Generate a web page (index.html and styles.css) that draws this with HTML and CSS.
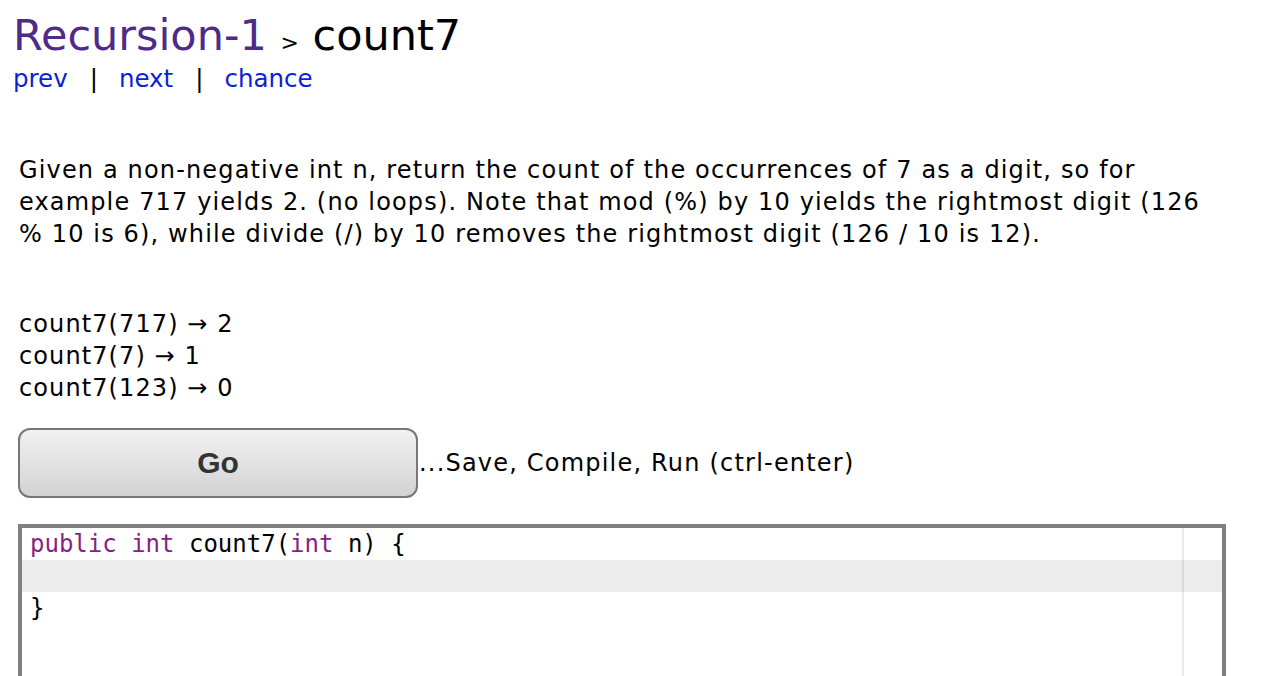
FILE: index.html
```html
<!DOCTYPE html>
<html>
<head>
<meta charset="utf-8">
<link rel="stylesheet" href="styles.css">
</head>
<body>
<div class="page">
  <h1 class="title"><a class="crumb" href="#">Recursion-1</a> <span class="sep">&gt;</span> <span class="name">count7</span></h1>
  <div class="nav"><a href="#">prev</a><span class="bar">|</span><a href="#">next</a><span class="bar">|</span><a href="#">chance</a></div>
  <p class="desc">Given a non-negative int n, return the count of the occurrences of 7 as a digit, so for example 717 yields 2. (no loops). Note that mod (%) by 10 yields the rightmost digit (126 % 10 is 6), while divide (/) by 10 removes the rightmost digit (126 / 10 is 12).</p>
  <div class="examples">
    <div>count7(717) &rarr; 2</div>
    <div>count7(7) &rarr; 1</div>
    <div>count7(123) &rarr; 0</div>
  </div>
  <div class="run">
    <button class="go">Go</button>
    <span class="hint">...Save, Compile, Run (ctrl-enter)</span>
  </div>
  <div class="editor">
    <div class="margin-line"></div>
    <div class="line"><span class="kw">public</span> <span class="kw">int</span> count7(<span class="kw">int</span> n) {</div>
    <div class="line active"></div>
    <div class="line">}</div>
  </div>
</div>
</body>
</html>
```

FILE: styles.css
```css
html, body {
  margin: 0;
  padding: 0;
  background: #fff;
}
.page {
  font-family: "DejaVu Sans", Verdana, sans-serif;
  color: #000;
}
.title {
  margin: 10px 0 0 13px;
  font-size: 43px;
  line-height: 50px;
  font-weight: normal;
}
.crumb {
  color: #4e2a8a;
  text-decoration: none;
}
.sep {
  font-size: 22px;
  line-height: 1;
}
.name {
  color: #000;
}
.nav {
  margin: 3px 0 0 13px;
  font-size: 24.5px;
  line-height: 32px;
}
.nav a {
  color: #0a1fd8;
  text-decoration: none;
}
.bar {
  margin: 0 21px 0 22px;
}
.desc {
  width: 1200px;
  margin: 59px 0 0 19px;
  font-size: 24px;
  letter-spacing: 1.15px;
  line-height: 32px;
}
.examples {
  margin: 58px 0 0 19px;
  font-size: 24px;
  letter-spacing: 1.1px;
  line-height: 32px;
}
.run {
  display: flex;
  align-items: center;
  margin: 24px 0 0 18px;
}
.go {
  width: 400px;
  height: 70px;
  border: 2px solid #777;
  border-radius: 12px;
  background: linear-gradient(#f2f2f2, #d2d2d2);
  font-family: "Liberation Sans", Arial, sans-serif;
  font-weight: bold;
  font-size: 30px;
  color: #333;
  padding: 0;
}
.hint {
  font-size: 24px;
  letter-spacing: 1.2px;
  margin-left: 1px;
}
.editor {
  position: relative;
  margin: 26px 0 0 18px;
  width: 1200px;
  height: 160px;
  border: 4px solid #808080;
  border-bottom: none;
  font-family: "DejaVu Sans Mono", monospace;
  font-size: 24px;
}
.line {
  height: 32px;
  line-height: 32px;
  padding-left: 8px;
  white-space: pre;
}
.line.active {
  background: #ececec;
}
.kw {
  color: #871f86;
}
.margin-line {
  position: absolute;
  top: 0;
  bottom: 0;
  left: 1160px;
  width: 2px;
  background: rgba(0, 0, 0, 0.08);
}
```
